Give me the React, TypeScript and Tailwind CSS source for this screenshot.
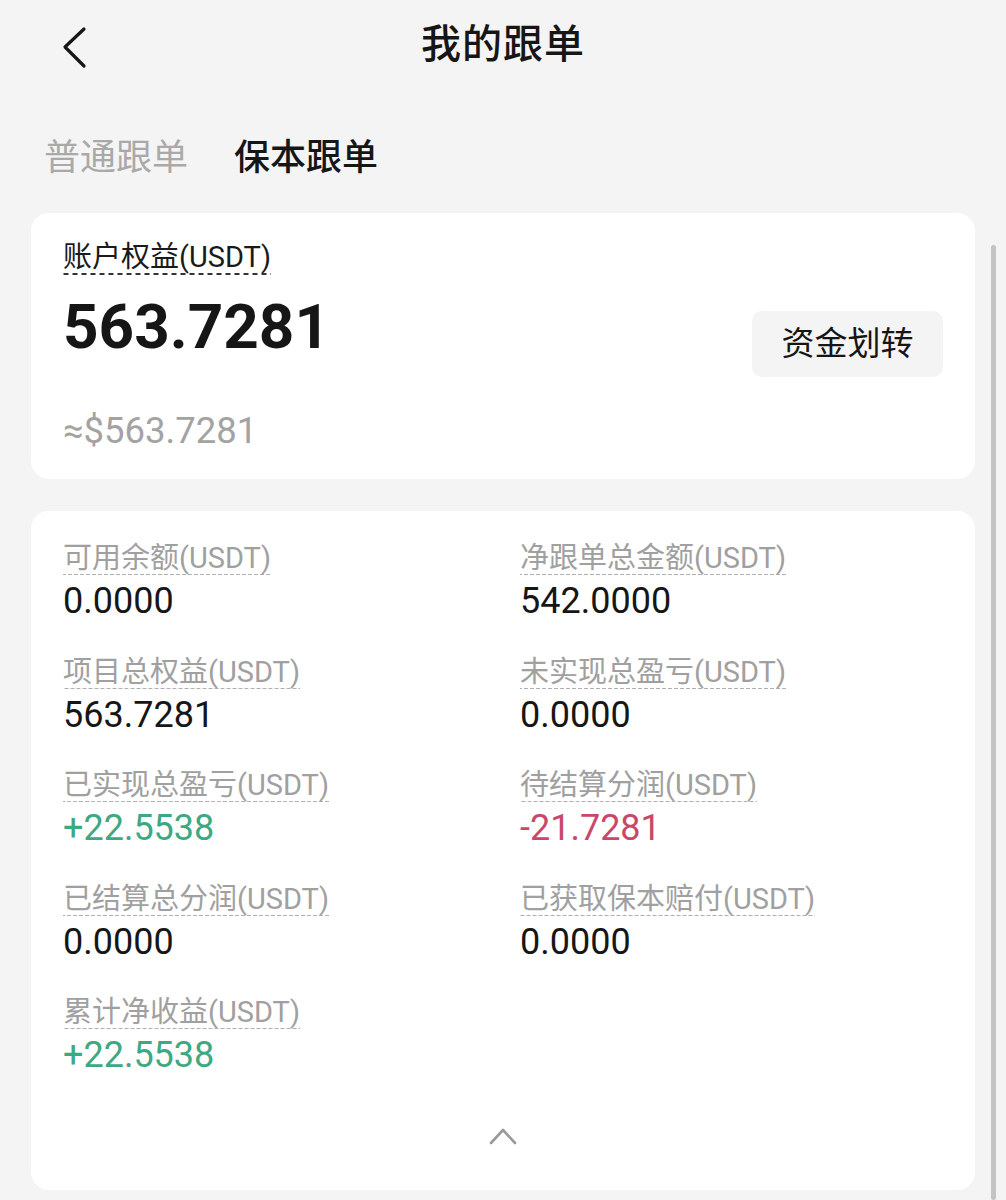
import React from "react";

const font = { fontFamily: 'Roboto, "Noto Sans CJK SC", sans-serif' };

type Stat = { label: string; value: string; tone?: "up" | "down" };

const stats: Stat[] = [
  { label: "可用余额(USDT)", value: "0.0000" },
  { label: "净跟单总金额(USDT)", value: "542.0000" },
  { label: "项目总权益(USDT)", value: "563.7281" },
  { label: "未实现总盈亏(USDT)", value: "0.0000" },
  { label: "已实现总盈亏(USDT)", value: "+22.5538", tone: "up" },
  { label: "待结算分润(USDT)", value: "-21.7281", tone: "down" },
  { label: "已结算总分润(USDT)", value: "0.0000" },
  { label: "已获取保本赔付(USDT)", value: "0.0000" },
  { label: "累计净收益(USDT)", value: "+22.5538", tone: "up" },
];

function toneClass(tone?: "up" | "down") {
  if (tone === "up") return "text-[#3ea882]";
  if (tone === "down") return "text-[#c9486a]";
  return "text-[#161616]";
}

export default function App() {
  return (
    <div className="relative min-h-[1200px] bg-[#f4f4f4] text-[#161616]" style={font}>
      {/* Header */}
      <div className="relative flex h-[90px] items-center justify-center">
        <button className="absolute left-[58px] top-[22px] p-1">
          <svg width="28" height="44" viewBox="0 0 28 44" fill="none">
            <path d="M22 3 L3 21 L22 40" stroke="#161616" strokeWidth="3.2" strokeLinecap="round" strokeLinejoin="round" />
          </svg>
        </button>
        <h1 className="text-[40px] font-medium leading-none tracking-[1px]">我的跟单</h1>
      </div>

      {/* Tabs */}
      <div className="flex h-[123px] items-center gap-[46px] pl-[44px] pt-[12px] text-[36px] leading-none">
        <span className="text-[#a9a9a9]">普通跟单</span>
        <span className="font-medium text-[#161616]">保本跟单</span>
      </div>

      {/* Equity card */}
      <div className="mx-[31px] rounded-[18px] bg-white px-[32px] pb-[26px] pt-[28px]">
        <div>
          <span className="inline-block bg-[linear-gradient(to_right,#333_60%,transparent_0)] bg-[length:9px_2px] bg-bottom bg-repeat-x pb-[2px] text-[29px] leading-[32px] text-[#1a1a1a]">
            账户权益(USDT)
          </span>
        </div>
        <div className="mt-[16px] flex items-start justify-between">
          <div className="text-[62px] font-bold leading-[72px]">563.7281</div>
          <button className="mt-[20px] flex h-[66px] w-[191px] items-center justify-center rounded-[10px] bg-[#f4f4f4] text-[33px] text-[#161616]">
            资金划转
          </button>
        </div>
        <div className="mt-[32px] text-[36.5px] leading-[44px] text-[#a3a3a3]">≈$563.7281</div>
      </div>

      {/* Stats card */}
      <div className="mx-[31px] mt-[32px] rounded-[18px] bg-white px-[32px] pb-[30px] pt-[31px]">
        <div className="grid grid-cols-[457px_1fr] gap-y-[32.5px]">
          {stats.map((s) => (
            <div key={s.label} className="flex flex-col items-start">
              <span className="bg-[linear-gradient(to_right,#b0b0b0_60%,transparent_0)] bg-[length:6px_1px] bg-bottom bg-repeat-x pb-[1px] text-[29px] leading-[32px] text-[#a0a0a0]">
                {s.label}
              </span>
              <span className={`mt-[4px] text-[36px] leading-[44px] ${toneClass(s.tone)}`}>{s.value}</span>
            </div>
          ))}
        </div>
        <div className="mt-[50px] flex justify-center">
          <svg width="30" height="20" viewBox="0 0 30 20" fill="none">
            <path d="M3 16 L15 3 L27 16" stroke="#9a9a9a" strokeWidth="2.6" strokeLinecap="round" strokeLinejoin="round" />
          </svg>
        </div>
        <div className="h-[13px]" />
      </div>

      {/* Scroll indicator */}
      <div className="absolute right-[10px] top-[245px] h-[955px] w-[5px] rounded-full bg-[#c4c4c4]" />
    </div>
  );
}
